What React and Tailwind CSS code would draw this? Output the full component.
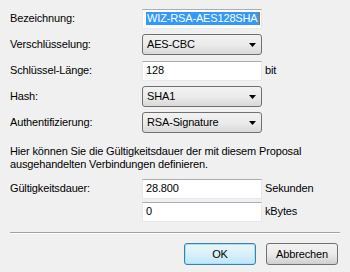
import React from "react";

const Caret = () => (
  <svg width="8" height="4" viewBox="0 0 8 4" className="block">
    <path d="M0 0h7l-3.5 4z" fill="#000" />
  </svg>
);

const Select = ({ value }) => (
  <div className="w-[120px] h-[21px] flex items-center justify-between pl-[4px] pr-[4px] rounded-[3px] border border-[#707070] bg-gradient-to-b from-[#f2f2f2] via-[#ebebeb] to-[#d9d9d9]">
    <span>{value}</span>
    <Caret />
  </div>
);

const Input = ({ children, className = "" }) => (
  <div
    className={
      "w-[120px] h-[20px] flex items-center pl-[3px] bg-white border border-[#e3e9ef] border-t-[#abadb3] " +
      className
    }
  >
    {children}
  </div>
);

const Row = ({ label, children, unit }) => (
  <div className="flex items-center h-[21px]">
    <div className="w-[132px]">{label}</div>
    {children}
    {unit && <span className="ml-[3px]">{unit}</span>}
  </div>
);

export default function App() {
  return (
    <div
      className="w-[350px] h-[272px] bg-[#f0f0f0] text-black text-[11px] tracking-[-0.15px] leading-[13px] overflow-hidden"
      style={{ fontFamily: '"Liberation Sans", Arial, sans-serif' }}
    >
      <div className="pl-[10px] pt-[8px] flex flex-col gap-[5px]">
        <Row label="Bezeichnung:">
          <Input className="border-[#7eb4ea] pl-[2px]">
            <span className="bg-[#3399ff] text-white px-[1px]">WIZ-RSA-AES128SHA</span>
            <span className="w-px h-[13px] bg-[#c46a1a]" />
          </Input>
        </Row>
        <Row label="Verschlüsselung:">
          <Select value="AES-CBC" />
        </Row>
        <Row label="Schlüssel-Länge:" unit="bit">
          <Input>128</Input>
        </Row>
        <Row label="Hash:">
          <Select value="SHA1" />
        </Row>
        <Row label="Authentifizierung:">
          <Select value="RSA-Signature" />
        </Row>
      </div>

      <p className="pl-[10px] mt-[12px] w-[340px]">
        Hier können Sie die Gültigkeitsdauer der mit diesem Proposal ausgehandelten Verbindungen definieren.
      </p>

      <div className="pl-[10px] mt-[7px] flex flex-col gap-[2px]">
        <Row label="Gültigkeitsdauer:" unit="Sekunden">
          <Input>28.800</Input>
        </Row>
        <Row label="" unit="kBytes">
          <Input>0</Input>
        </Row>
      </div>

      <div className="mx-[10px] mt-[10px] h-[2px] border-t border-[#a0a0a0] border-b border-b-white" />

      <div className="flex justify-end gap-[10px] pr-[12px] mt-[9px]">
        <button className="w-[72px] h-[22px] rounded-[3px] border border-[#3c7fb1] bg-gradient-to-b from-[#eaf6fd] via-[#d9f0fc] to-[#bee6fd] shadow-[inset_0_0_0_1px_#a6e1fb]">
          OK
        </button>
        <button className="w-[72px] h-[22px] rounded-[3px] border border-[#707070] bg-gradient-to-b from-[#f2f2f2] via-[#ebebeb] to-[#cfcfcf]">
          Abbrechen
        </button>
      </div>
    </div>
  );
}
